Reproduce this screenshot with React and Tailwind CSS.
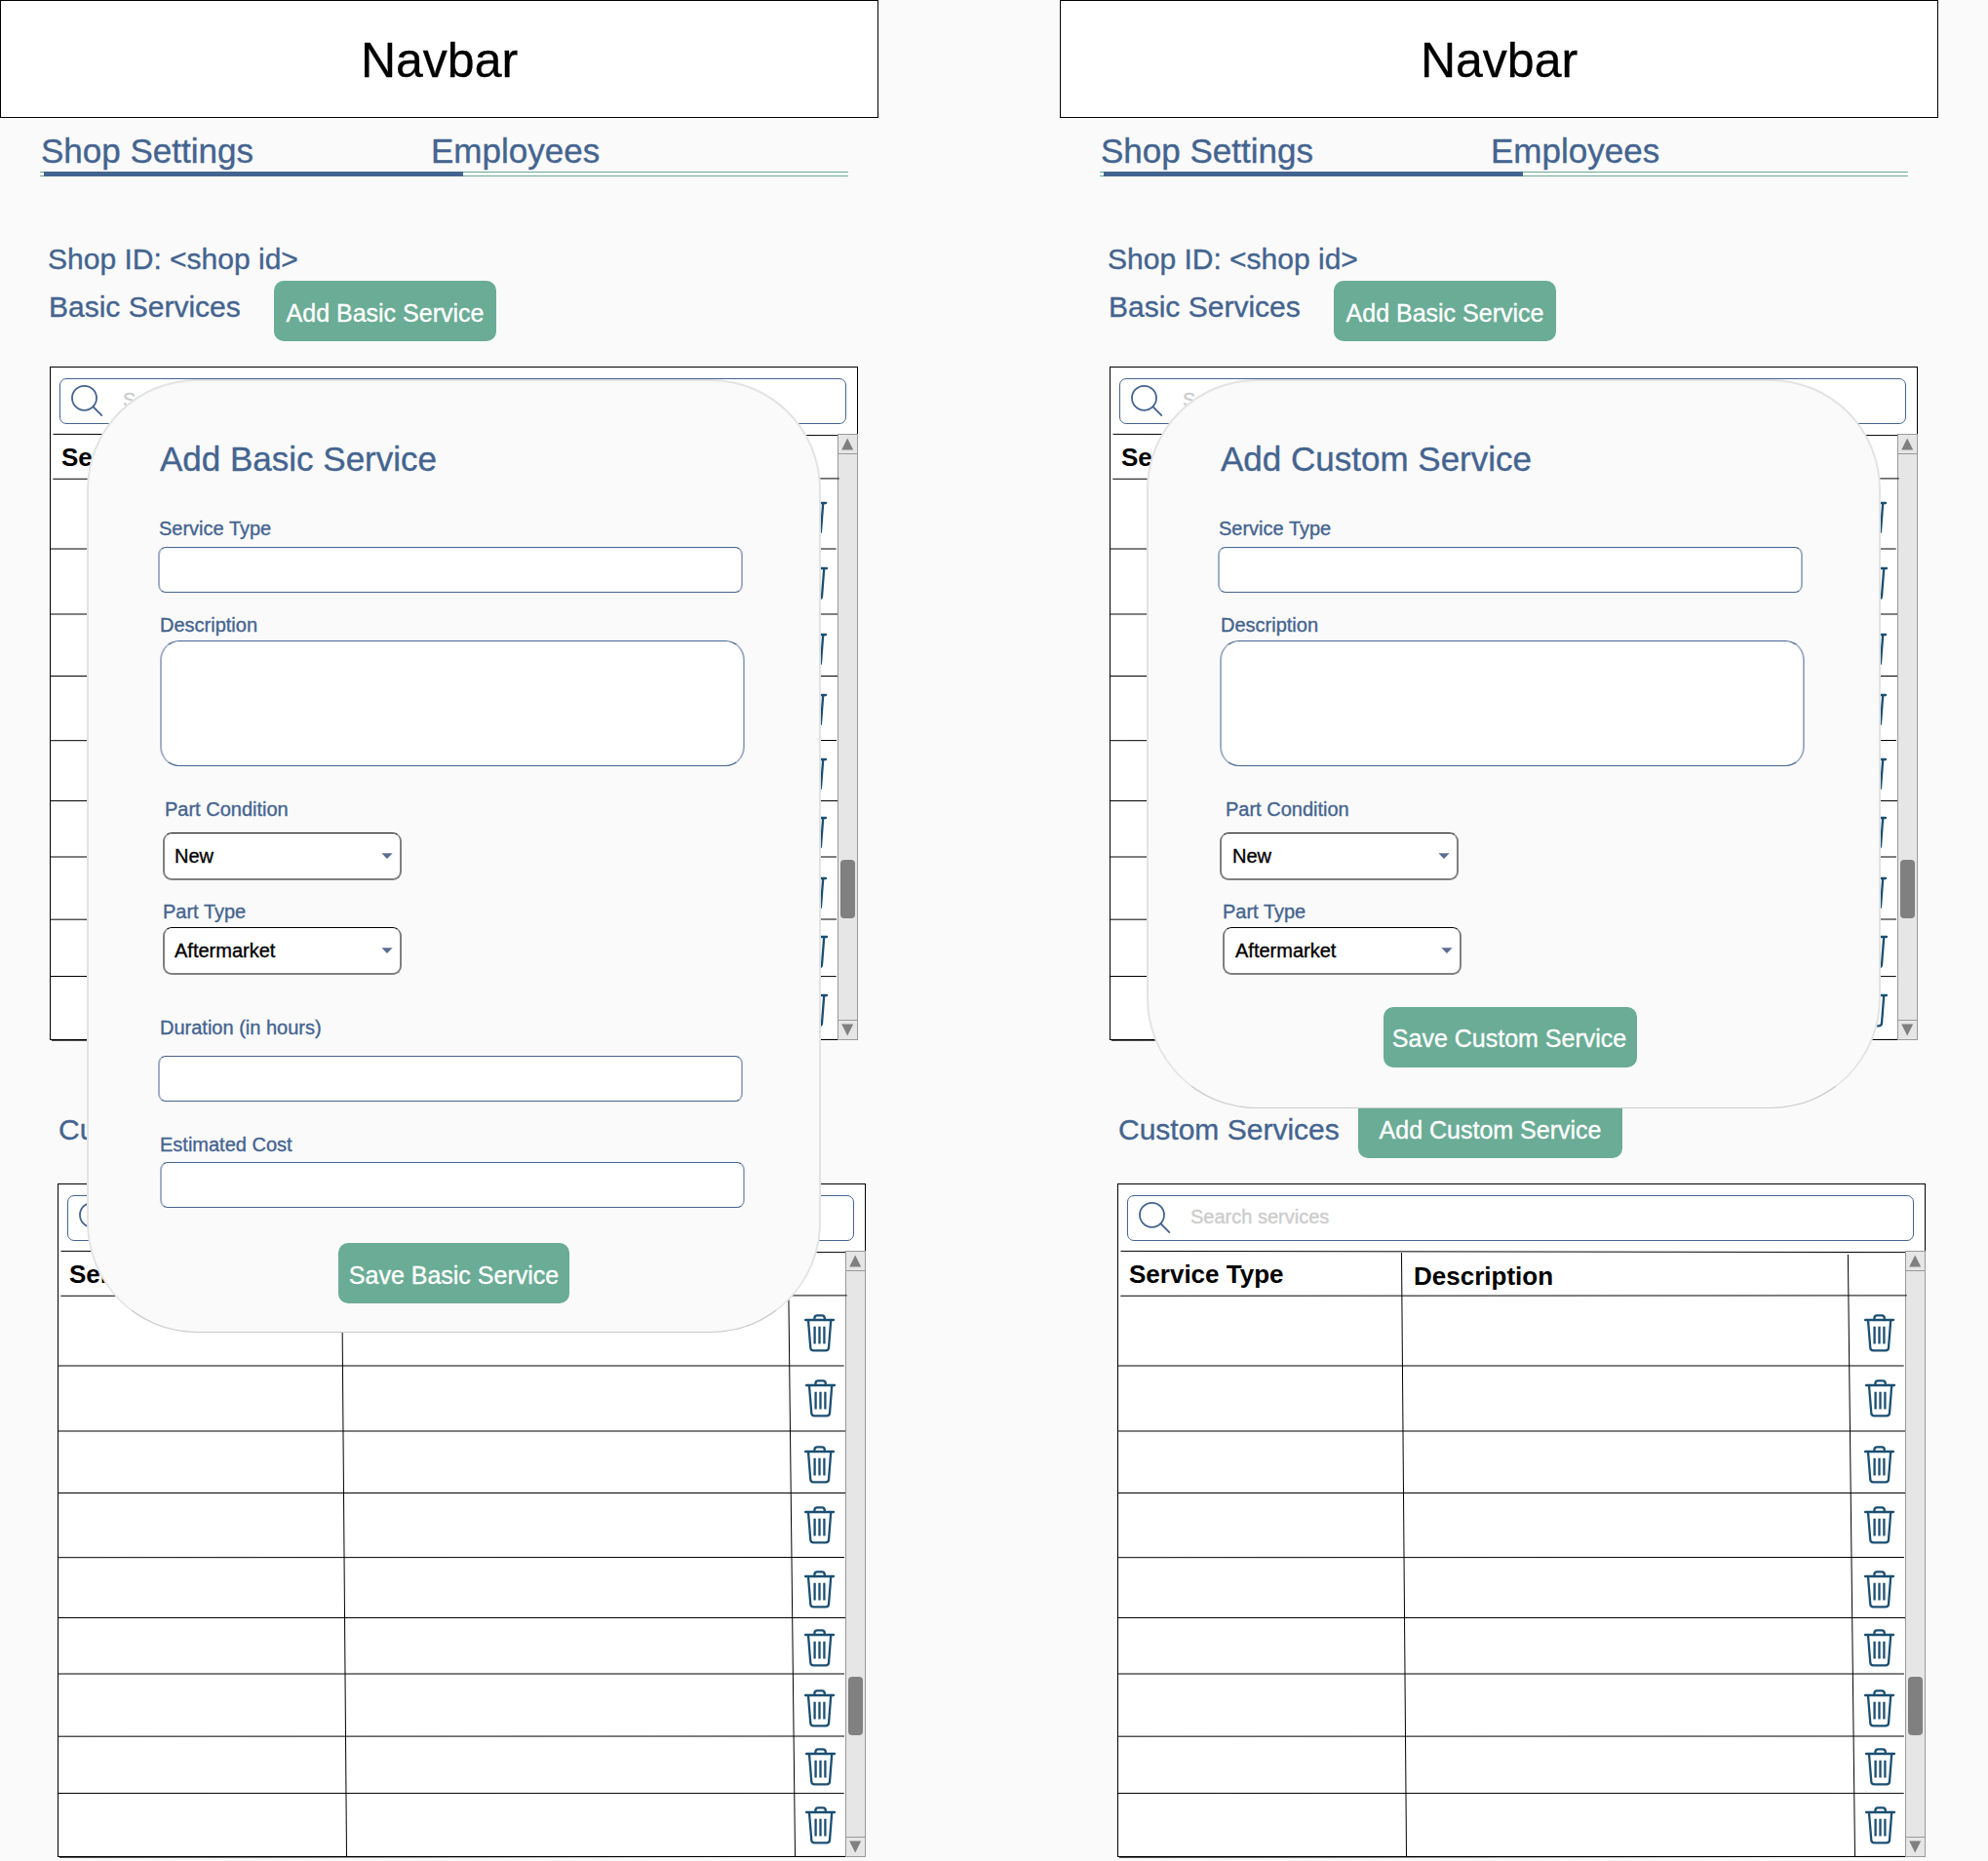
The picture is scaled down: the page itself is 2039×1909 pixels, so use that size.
const ROWS = [
  { row: "h-[72px]", icon: "mt-[19px] ml-[14px]" },
  { row: "h-[67px]", icon: "mt-[14px] ml-[15px]" },
  { row: "h-[63px]", icon: "mt-[15px] ml-[14px]" },
  { row: "h-[66px]", icon: "mt-[14px] ml-[14px]" },
  { row: "h-[62px]", icon: "mt-[14px] ml-[14px]" },
  { row: "h-[58px]", icon: "mt-[12px] ml-[14px]" },
  { row: "h-[64px]", icon: "mt-[16px] ml-[14px]" },
  { row: "h-[58px]", icon: "mt-[12px] ml-[15px]" },
  { row: "h-[65px]", icon: "mt-[14px] ml-[15px]" },
];

/* Hand-drawn table rules: [x1, y1, x2, y2] */
const RULES = [
  [3.5, 69.4, 808, 70.6],
  [3.3, 115.3, 809.7, 114.9],
  [1, 187, 806.7, 187],
  [1, 254, 808, 254],
  [1, 317.5, 808, 317.5],
  [1, 383.7, 807, 383.5],
  [1, 445.5, 808, 445.5],
  [1, 503, 807, 503],
  [1, 567.2, 807, 567],
  [1, 625.5, 806.7, 625.6],
  [2, 691.2, 808, 690.4],
  [291.5, 71, 296.5, 690],
  [749.4, 73, 756.5, 690],
];

function TrashIcon({ className }) {
  return (
    <svg className={className} width="32" height="39" viewBox="0 0 32 39" fill="none" stroke="#1b4f72" strokeWidth="2.3" strokeLinecap="round" strokeLinejoin="round">
      <path d="M1.1 6H30" />
      <path d="M10.4 6V4.3Q10.4 1.4 13.2 1.4H18Q20.8 1.4 20.8 4.3V6" />
      <path d="M4 6.4L6.3 34.6Q6.6 37.3 9.3 37.3H22Q24.7 37.3 25 34.6L27.2 6.4" />
      <path d="M10.6 12.8V30.4M15.5 12.8V30.4M20.4 12.8V30.4" strokeLinecap="butt" />
    </svg>
  );
}

function SearchIcon() {
  return (
    <svg width="50" height="45" viewBox="0 0 50 45" fill="none" stroke="#44648f" strokeWidth="1.8" className="shrink-0">
      <circle cx="24.5" cy="19.3" r="12.5" />
      <path d="M33.3 28L42.8 37.6" />
    </svg>
  );
}

function Scrollbar() {
  return (
    <div className="flex h-[622px] w-[21px] flex-col border border-[#999999] bg-[#e6e6e6]">
      <div className="flex h-5 justify-center border-b border-[#999999] pt-[3px]">
        <svg width="13" height="13" viewBox="0 0 13 13" fill="#808080"><path d="M6.2 0.4L12.2 12.6H0.2Z" /></svg>
      </div>
      <div className="mt-[416px] ml-[2px] h-[60px] w-[15px] rounded-[4px] bg-[#808080]" />
      <div className="mt-auto flex h-5 justify-center border-t border-[#999999] pt-[3px]">
        <svg width="13" height="13" viewBox="0 0 13 13" fill="#808080"><path d="M0.2 0.4H12.2L6.2 12.6Z" /></svg>
      </div>
    </div>
  );
}

function ServiceTable({ className }) {
  return (
    <div className={"relative h-[691px] w-[829px] " + className}>
      <div className="h-[69px] border-x border-t border-black bg-white pt-[11px] pl-[9px]">
        <div className="flex h-[47px] w-[807px] rounded-[7px] border border-[#44648f]">
          <SearchIcon />
          <span className="ml-[14px] pt-[9px] text-[20px] leading-6 text-[#cccccc]">Search services</span>
        </div>
      </div>
      <div className="flex">
        <div className="h-[622px] w-[808px] border-b border-l border-black bg-white">
          <div className="grid h-[46px] grid-cols-[292px_459px_1fr] text-[26px] leading-[30px] font-bold text-black [-webkit-text-stroke:0px]">
            <div className="pt-[9px] pl-[11px]">Service Type</div>
            <div className="pt-[11px] pl-[11px]">Description</div>
            <div />
          </div>
          {ROWS.map((r, i) => (
            <div key={i} className={"grid grid-cols-[292px_459px_1fr] " + r.row}>
              <div />
              <div />
              <div><TrashIcon className={r.icon} /></div>
            </div>
          ))}
        </div>
        <Scrollbar />
      </div>
      <svg className="pointer-events-none absolute top-0 left-0" width="829" height="693" viewBox="0 0 829 693" stroke="black" strokeWidth="1">
        {RULES.map(([x1, y1, x2, y2], i) => (
          <line key={i} x1={x1} y1={y1} x2={x2} y2={y2} />
        ))}
      </svg>
    </div>
  );
}

function Label({ className, children }) {
  return <div className={"text-[20px] leading-6 whitespace-nowrap " + className}>{children}</div>;
}

function Field({ className }) {
  return <div className={"w-[600px] shrink-0 border-x-2 border-y border-x-[#a0aec5] border-y-[#44648f] bg-white " + className} />;
}

function Select({ className, value }) {
  return (
    <div className={"flex h-[49px] w-[245px] shrink-0 items-center justify-between rounded-[9px] border-2 border-t border-[#808080] border-t-black bg-white pr-[7px] text-[20px] leading-6 text-black " + className}>
      <span>{value}</span>
      <svg width="12" height="6" viewBox="0 0 12 6" fill="#5a6d92" className="mb-[1px]"><path d="M0.4 0.2H11.6L6 6Z" /></svg>
    </div>
  );
}

function Button({ className, children }) {
  return (
    <div className={"flex shrink-0 items-center justify-center rounded-[10px] bg-[#6aac95] text-[25px] leading-[30px] whitespace-nowrap text-white " + className}>
      {children}
    </div>
  );
}

function BasicServiceModal() {
  return (
    <div className="absolute top-[389px] left-[89px] flex h-[978px] w-[753px] flex-col items-start rounded-[113px] border-2 border-b border-[#e3e3e3] border-b-[#cccccc] bg-[#fafafa]">
      <div className="mt-[60px] ml-[73px] text-[35px] leading-10 whitespace-nowrap">Add Basic Service</div>
      <Label className="mt-[39px] ml-[72px]">Service Type</Label>
      <Field className="mt-[7px] ml-[71px] h-[47px] rounded-[8px]" />
      <Label className="mt-[21px] ml-[73px]">Description</Label>
      <Field className="mt-[4px] ml-[73px] h-[129px] rounded-[20px]" />
      <Label className="mt-[32px] ml-[78px]">Part Condition</Label>
      <Select className="mt-[12px] ml-[76px] pl-[10px]" value="New" />
      <Label className="mt-[20px] ml-[76px]">Part Type</Label>
      <Select className="mt-[4px] ml-[76px] pl-[10px]" value="Aftermarket" />
      <Label className="mt-[42px] ml-[73px]">Duration (in hours)</Label>
      <Field className="mt-[17px] ml-[71px] h-[47px] rounded-[8px]" />
      <Label className="mt-[32px] ml-[73px]">Estimated Cost</Label>
      <Field className="mt-[6px] ml-[73px] h-[47px] rounded-[8px]" />
      <Button className="mt-[36px] ml-[256px] h-[62px] w-[237px] pt-[3px]">Save Basic Service</Button>
    </div>
  );
}

function CustomServiceModal() {
  return (
    <div className="absolute top-[389px] left-[89px] flex h-[748px] w-[753px] flex-col items-start rounded-[113px] border-2 border-b border-[#e3e3e3] border-b-[#cccccc] bg-[#fafafa]">
      <div className="mt-[60px] ml-[74px] text-[35px] leading-10 whitespace-nowrap">Add Custom Service</div>
      <Label className="mt-[39px] ml-[72px]">Service Type</Label>
      <Field className="mt-[7px] ml-[71px] h-[47px] rounded-[8px]" />
      <Label className="mt-[21px] ml-[74px]">Description</Label>
      <Field className="mt-[4px] ml-[73px] h-[129px] rounded-[20px]" />
      <Label className="mt-[32px] ml-[79px]">Part Condition</Label>
      <Select className="mt-[12px] ml-[73px] pl-[11px]" value="New" />
      <Label className="mt-[20px] ml-[76px]">Part Type</Label>
      <Select className="mt-[4px] ml-[76px] pl-[11px]" value="Aftermarket" />
      <Button className="mt-[33px] ml-[241px] h-[62px] w-[260px] pt-[1px] pr-[2px]">Save Custom Service</Button>
    </div>
  );
}

function Screen({ children }) {
  return (
    <div className="relative flex h-[1909px] w-[901px] shrink-0 flex-col items-start text-[#44648f]">
      <div className="flex h-[121px] w-full items-center justify-center border border-black bg-white pt-[2px] text-[50px] leading-[56px] text-black">
        Navbar
      </div>
      <div className="mt-[14px] ml-[42px] flex text-[35px] leading-10">
        <div className="w-[400px]">Shop Settings</div>
        <div>Employees</div>
      </div>
      <div className="mt-[1px] ml-[41px] flex h-[5px] w-[829px]">
        <div className="w-[4px] border-y border-[#6aac95]" />
        <div className="w-[430px] bg-[#44648f]" />
        <div className="flex-1 border-y border-[#6aac95]" />
      </div>
      <div className="mt-[68px] ml-[49px] text-[30px] leading-[34px]">{"Shop ID: <shop id>"}</div>
      <div className="mt-[5px] ml-[50px] flex h-[62px] items-start">
        <div className="w-[231px] pt-[10px] text-[30px] leading-[34px]">Basic Services</div>
        <Button className="h-[62px] w-[228px] pt-[3px]">Add Basic Service</Button>
      </div>
      <ServiceTable className="mt-[26px] ml-[51px]" />
      <div className="mt-[60px] ml-[60px] flex h-[61px] items-start">
        <div className="w-[246px] pt-[15px] text-[30px] leading-[34px]">Custom Services</div>
        <Button className="h-[61px] w-[271px] pt-[3px]">Add Custom Service</Button>
      </div>
      <ServiceTable className="mt-[26px] ml-[59px]" />
      {children}
    </div>
  );
}

export default function App() {
  return (
    <div className="flex h-[1909px] w-[2039px] gap-[186px] overflow-hidden bg-[#fafafa] font-['Liberation_Sans',Arial,sans-serif] [-webkit-text-stroke:0.35px]">
      <Screen>
        <BasicServiceModal />
      </Screen>
      <Screen>
        <CustomServiceModal />
      </Screen>
    </div>
  );
}
